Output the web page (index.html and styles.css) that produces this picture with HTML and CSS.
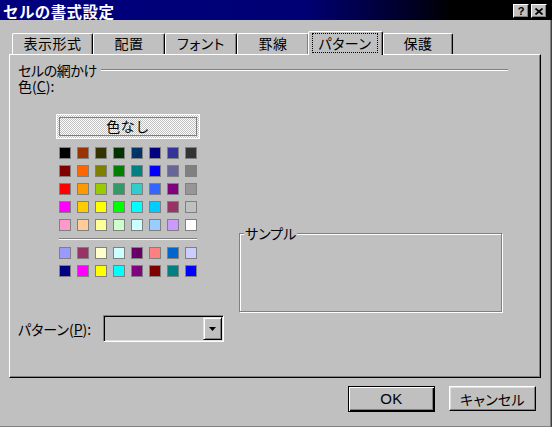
FILE: index.html
```html
<!DOCTYPE html>
<html lang="ja">
<head>
<meta charset="utf-8">
<title>セルの書式設定</title>
<link rel="stylesheet" href="styles.css">
</head>
<body>
<div class="dialog">
  <div class="titlebar">
    <span class="title">セルの書式設定</span>
    <div class="tb-btns">
      <span class="tb-btn help">?</span>
      <span class="tb-btn close"><svg width="8" height="7" viewBox="0 0 8 7"><path d="M0.5 0.5L7.5 6.5M7.5 0.5L0.5 6.5" stroke="#000" stroke-width="1.7" fill="none"/></svg></span>
    </div>
  </div>
  <div class="tabs">
    <div class="tab t-wide">表示形式</div>
    <div class="tab">配置</div>
    <div class="tab">フォント</div>
    <div class="tab">罫線</div>
    <div class="tab active"><span class="focus">パターン</span></div>
    <div class="tab t-last">保護</div>
  </div>
  <div class="panel">
    <div class="heading"><span class="heading-text">セルの網かけ</span><span class="rule"></span></div>
    <div class="label color-label">色(<u>C</u>):</div>
    <div class="middle">
      <div class="picker">
        <div class="nocolor"><span class="nocolor-in">色なし</span></div>
        <div class="grid">
          <span class="sw" style="background:#000000"></span><span class="sw" style="background:#993300"></span><span class="sw" style="background:#333300"></span><span class="sw" style="background:#003300"></span><span class="sw" style="background:#003366"></span><span class="sw" style="background:#000080"></span><span class="sw" style="background:#333399"></span><span class="sw" style="background:#333333"></span>
          <span class="sw" style="background:#800000"></span><span class="sw" style="background:#FF6600"></span><span class="sw" style="background:#808000"></span><span class="sw" style="background:#008000"></span><span class="sw" style="background:#008080"></span><span class="sw" style="background:#0000FF"></span><span class="sw" style="background:#666699"></span><span class="sw" style="background:#808080"></span>
          <span class="sw" style="background:#FF0000"></span><span class="sw" style="background:#FF9900"></span><span class="sw" style="background:#99CC00"></span><span class="sw" style="background:#339966"></span><span class="sw" style="background:#33CCCC"></span><span class="sw" style="background:#3366FF"></span><span class="sw" style="background:#800080"></span><span class="sw" style="background:#969696"></span>
          <span class="sw" style="background:#FF00FF"></span><span class="sw" style="background:#FFCC00"></span><span class="sw" style="background:#FFFF00"></span><span class="sw" style="background:#00FF00"></span><span class="sw" style="background:#00FFFF"></span><span class="sw" style="background:#00CCFF"></span><span class="sw" style="background:#993366"></span><span class="sw" style="background:#C0C0C0"></span>
          <span class="sw" style="background:#FF99CC"></span><span class="sw" style="background:#FFCC99"></span><span class="sw" style="background:#FFFF99"></span><span class="sw" style="background:#CCFFCC"></span><span class="sw" style="background:#CCFFFF"></span><span class="sw" style="background:#99CCFF"></span><span class="sw" style="background:#CC99FF"></span><span class="sw" style="background:#FFFFFF"></span>
        </div>
        <div class="sep"></div>
        <div class="grid">
          <span class="sw" style="background:#9999FF"></span><span class="sw" style="background:#993366"></span><span class="sw" style="background:#FFFFCC"></span><span class="sw" style="background:#CCFFFF"></span><span class="sw" style="background:#660066"></span><span class="sw" style="background:#FF8080"></span><span class="sw" style="background:#0066CC"></span><span class="sw" style="background:#CCCCFF"></span>
          <span class="sw" style="background:#000080"></span><span class="sw" style="background:#FF00FF"></span><span class="sw" style="background:#FFFF00"></span><span class="sw" style="background:#00FFFF"></span><span class="sw" style="background:#800080"></span><span class="sw" style="background:#800000"></span><span class="sw" style="background:#008080"></span><span class="sw" style="background:#0000FF"></span>
        </div>
      </div>
      <div class="sample"><span class="sample-label">サンプル</span></div>
    </div>
    <div class="pattern-row">
      <span class="label pattern-label">パターン(<u>P</u>):</span>
      <div class="combo">
        <div class="combo-field"></div>
        <div class="combo-btn"><svg width="7" height="4" viewBox="0 0 7 4"><path d="M0 0H7L3.5 4Z" fill="#000"/></svg></div>
      </div>
    </div>
  </div>
  <div class="footer">
    <div class="btn default"><span class="btn-in ok">OK</span></div>
    <div class="btn"><span class="btn-in">キャンセル</span></div>
  </div>
</div>
</body>
</html>
```

FILE: styles.css
```css
html, body {
  margin: 0;
  padding: 0;
  background: #c0c0c0;
}

body {
  font-family: "Noto Sans CJK JP", "Noto Sans", sans-serif;
  font-size: 14px;
  color: #000;
}

.dialog {
  width: 552px;
  height: 427px;
  box-sizing: border-box;
  background: #c0c0c0;
  box-shadow: inset -1px 0 #404040, inset -2px -1px #808080;
  overflow: hidden;
}

/* Title bar */
.titlebar {
  height: 20px;
  box-sizing: border-box;
  display: flex;
  align-items: flex-start;
  justify-content: space-between;
  padding: 0 5px 0 3px;
  background: linear-gradient(90deg, #000080 0%, #000074 55%, #000030 72%, #000000 82%);
}

.title {
  color: #fff;
  font-weight: bold;
  font-size: 15.5px;
  line-height: 18px;
  padding-top: 2px;
  letter-spacing: 0.4px;
}

.tb-btns {
  display: flex;
  gap: 2px;
  margin-top: 4px;
}

.tb-btn {
  width: 16px;
  height: 14px;
  box-sizing: border-box;
  background: #c0c0c0;
  border: 1px solid;
  border-color: #fff #000 #000 #fff;
  box-shadow: inset -1px -1px #808080;
  display: flex;
  align-items: center;
  justify-content: center;
  font-family: "Liberation Sans", sans-serif;
  font-weight: bold;
  font-size: 11px;
  line-height: 12px;
}

/* Tabs */
.tabs {
  display: flex;
  align-items: flex-end;
  height: 23px;
  margin-top: 11px;
  padding-left: 12px;
}

.tab {
  width: 72px;
  height: 21px;
  box-sizing: border-box;
  border: 1px solid;
  border-bottom: none;
  border-color: #fff #000 transparent #fff;
  border-radius: 2px 2px 0 0;
  box-shadow: inset -1px 0 #808080;
  text-align: center;
  font-size: 14px;
  line-height: 19px;
  letter-spacing: 0.5px;
  font-feature-settings: "palt";
}

.tab.t-wide { width: 81px; }
.tab.t-last { width: 70px; }

.tab.active {
  width: 75px;
  height: 24px;
  margin-left: -1px;
  margin-bottom: -1px;
  position: relative;
  z-index: 2;
  background: #c0c0c0;
}

.focus {
  display: block;
  height: 20px;
  box-sizing: border-box;
  margin: 1px 4px 0 3px;
  border: 1px dotted #000;
  line-height: 18px;
}

/* Panel */
.panel {
  margin-left: 9px;
  width: 532px;
  height: 324px;
  box-sizing: border-box;
  border: 1px solid;
  border-color: #fff #000 #000 #fff;
  box-shadow: inset -1px -1px #808080;
  padding: 7px 32px 0 8px;
}

.heading {
  display: flex;
  align-items: center;
  height: 16px;
  line-height: 16px;
  font-feature-settings: "palt";
}

.heading-text {
  letter-spacing: -0.4px;
}

.rule {
  flex: 1;
  height: 0;
  border-top: 1px solid #808080;
  border-bottom: 1px solid #fff;
  margin-left: 4px;
}

.label {
  height: 16px;
  line-height: 16px;
  font-feature-settings: "palt";
}

.color-label {
  line-height: 17px;
}

.middle {
  display: flex;
  align-items: flex-start;
  margin-top: 20px;
  margin-left: 38px;
}

.picker {
  width: 144px;
  flex: none;
}

.nocolor {
  height: 25px;
  box-sizing: border-box;
  border: 1px solid #fff;
  padding: 2px;
  background: repeating-conic-gradient(#ffffff 0 25%, #c0c0c0 0 50%) 0 0 / 2px 2px;
}

.nocolor-in {
  display: block;
  height: 19px;
  box-sizing: border-box;
  border: 1px solid #808080;
  text-align: center;
  line-height: 17px;
  font-size: 14px;
  letter-spacing: 0.5px;
}

.grid {
  display: grid;
  grid-template-columns: repeat(8, 12px);
  grid-auto-rows: 12px;
  gap: 6px;
  margin-left: 3px;
  margin-top: 8px;
}

.sep + .grid {
  margin-top: 7px;
}

.sw {
  display: block;
  width: 12px;
  height: 12px;
  box-sizing: border-box;
  border: 1px solid #808080;
}

.sep {
  width: 138px;
  height: 0;
  margin: 7px 0 0 3px;
  border-top: 1px solid #808080;
  border-bottom: 1px solid #fff;
}

.sample {
  position: relative;
  flex: none;
  width: 263px;
  height: 79px;
  box-sizing: border-box;
  margin-left: 39px;
  margin-top: 119px;
  border: 1px solid #808080;
  box-shadow: inset 1px 1px #fff, 1px 1px #fff;
}

.sample-label {
  position: absolute;
  top: -9px;
  left: 4px;
  padding: 0 1px;
  background: #c0c0c0;
  line-height: 16px;
  font-feature-settings: "palt";
}

/* Pattern row */
.pattern-row {
  display: flex;
  align-items: center;
  margin-top: 3px;
  height: 27px;
}

.pattern-label {
  width: 85px;
  flex: none;
}

.combo {
  width: 121px;
  height: 27px;
  box-sizing: border-box;
  display: flex;
  border: 1px solid;
  border-color: #808080 #fff #fff #808080;
  box-shadow: inset 1px 1px #000, inset -1px -1px #dfdfdf;
  padding: 1px;
  background: #c0c0c0;
}

.combo-field {
  flex: 1;
}

.combo-btn {
  width: 19px;
  box-sizing: border-box;
  border: 1px solid;
  border-color: #dfdfdf #000 #000 #dfdfdf;
  box-shadow: inset 1px 1px #fff, inset -1px -1px #808080;
  background: #c0c0c0;
  display: flex;
  align-items: center;
  justify-content: center;
}

/* Footer */
.footer {
  display: flex;
  justify-content: flex-end;
  gap: 14px;
  margin-top: 8px;
  padding-right: 16px;
}

.btn {
  width: 87px;
  height: 25px;
  box-sizing: border-box;
  border: 1px solid;
  border-color: #fff #000 #000 #fff;
  box-shadow: inset -1px -1px #808080, inset 1px 1px #dfdfdf;
  display: flex;
  align-items: center;
  justify-content: center;
}

.btn.default {
  height: 26px;
  border-color: #000;
  box-shadow: inset 1px 1px #fff, inset -1px -1px #000, inset -2px -2px #808080;
}

.btn-in {
  font-size: 14px;
  line-height: 16px;
  font-feature-settings: "palt";
  letter-spacing: 0.3px;
}

.btn-in.ok {
  font-family: "Liberation Sans", sans-serif;
  font-size: 15px;
}
```
